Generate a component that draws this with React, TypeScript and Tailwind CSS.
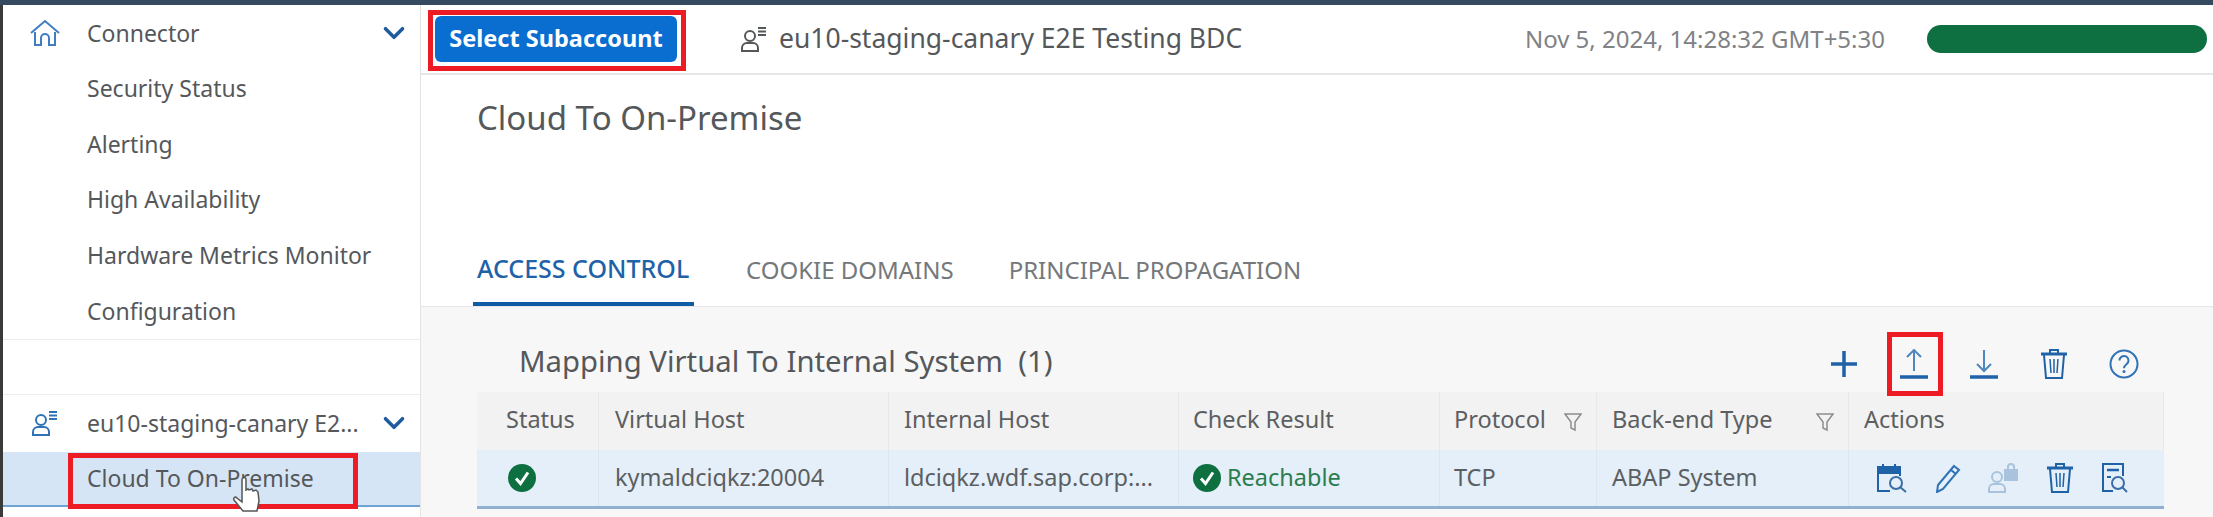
import { ChevronDown } from "lucide-react";

const font = { fontFamily: '"Noto Sans", sans-serif' };

function HomeIcon() {
  return (
    <svg width="30" height="28" viewBox="0 0 30 28" fill="none" stroke="#3f7fc1" strokeWidth="2">
      <path d="M1 14 15 2l14 12" />
      <path d="M5 13v13h6v-7a4 4 0 0 1 8 0v7h6V13" />
    </svg>
  );
}

function SubaccountIcon({ color = "#2f72b5", size = 26 }: { color?: string; size?: number }) {
  return (
    <svg width={size} height={size} viewBox="0 0 26 26" fill="none" stroke={color} strokeWidth="2">
      <circle cx="9" cy="10" r="5" />
      <path d="M1 25v-3a5 5 0 0 1 5-5h6a5 5 0 0 1 5 5v3z" />
      <path d="M17 2h8M17 5.500h8M17 9h8" />
    </svg>
  );
}

function FilterIcon() {
  return (
    <svg width="18" height="20" viewBox="0 0 18 20" fill="none" stroke="#8a8d90" strokeWidth="1.500">
      <path d="M1 2h16l-6 8v8l-4-2v-6z" />
    </svg>
  );
}

function TrashIcon() {
  return (
    <svg width="26" height="30" viewBox="0 0 26 30" fill="none" stroke="#1f62a8" strokeWidth="2">
      <path d="M0 5h26" strokeWidth="3" />
      <path d="M9 4V1h8v3" />
      <path d="M3 6l2 23h16l2-23" />
      <path d="M9 10l1 14M13 10v14M17 10l-1 14" strokeWidth="1.500" />
    </svg>
  );
}

function CheckCircle() {
  return (
    <svg width="28" height="28" viewBox="0 0 28 28">
      <circle cx="14" cy="14" r="14" fill="#0e7040" />
      <path d="M8 14.500l4.500 5L20 8.500" fill="none" stroke="#fff" strokeWidth="3" />
    </svg>
  );
}

function ToolbarIcons() {
  return (
    <div className="flex items-center">
      <div className="w-[70px] flex justify-center">
        <svg width="26" height="26" viewBox="0 0 26 26" stroke="#1f62a8" strokeWidth="3.500">
          <path d="M0 13h26M13 0v26" />
        </svg>
      </div>
      <div className="w-[70px] flex justify-center">
        <svg width="28" height="30" viewBox="0 0 28 30" fill="none" stroke="#4f86bf" strokeWidth="2">
          <path d="M14 1v21M7 8l7-7 7 7" />
          <path d="M0 28h28" stroke="#1f62a8" strokeWidth="3.500" />
        </svg>
      </div>
      <div className="w-[70px] flex justify-center">
        <svg width="28" height="30" viewBox="0 0 28 30" fill="none" stroke="#4f86bf" strokeWidth="2">
          <path d="M14 1v21M7 15l7 7 7-7" />
          <path d="M0 28h28" stroke="#1f62a8" strokeWidth="3.500" />
        </svg>
      </div>
      <div className="w-[70px] flex justify-center">
        <TrashIcon />
      </div>
      <div className="w-[70px] flex justify-center">
        <svg width="30" height="30" viewBox="0 0 30 30" fill="none">
          <circle cx="15" cy="15" r="13.500" stroke="#2f72b5" strokeWidth="2" />
          <path d="M10.500 11.500a4.500 4.500 0 1 1 7 3.700c-1.700 1.200-2.500 2-2.500 4" stroke="#2f72b5" strokeWidth="2" />
          <circle cx="15" cy="22.500" r="1.500" fill="#2f72b5" />
        </svg>
      </div>
    </div>
  );
}

function RowActions() {
  return (
    <div className="flex items-center pl-[28px]">
      <div className="w-[58px]">
        <svg width="30" height="30" viewBox="0 0 30 30" fill="none" stroke="#1f62a8" strokeWidth="2">
          <path d="M13 28H1V4h22v9" />
          <path d="M1 4h22v6H1z" fill="#1f62a8" />
          <path d="M6 1v4M18 1v4" />
          <circle cx="19" cy="20" r="6" stroke="#3a6ea5" />
          <path d="M23 24l6 5" stroke="#3a6ea5" />
        </svg>
      </div>
      <div className="w-[53px]">
        <svg width="26" height="30" viewBox="0 0 26 30" fill="none" stroke="#2f72b5" strokeWidth="2">
          <path d="M19 3l5 4L8 26l-6 3 1-7z" />
          <path d="M16 7l5 4" />
        </svg>
      </div>
      <div className="w-[59px]">
        <svg width="30" height="30" viewBox="0 0 30 30" fill="none" stroke="#a9c3dc" strokeWidth="2">
          <circle cx="9" cy="14" r="5" />
          <path d="M1 29v-3a5 5 0 0 1 5-5h6a5 5 0 0 1 5 5v3z" />
          <rect x="17" y="7" width="12" height="10" fill="#a9c3dc" />
          <path d="M20 7V4a3 3 0 0 1 6 0v3" />
        </svg>
      </div>
      <div className="w-[55px]">
        <TrashIcon />
      </div>
      <div>
        <svg width="26" height="30" viewBox="0 0 26 30" fill="none" stroke="#1f62a8" strokeWidth="2">
          <path d="M11 28H1V1h20v12" />
          <path d="M5 7h12" strokeWidth="2.500" />
          <path d="M5 14h4" />
          <circle cx="16" cy="20" r="6" stroke="#3a6ea5" />
          <path d="M20 24l5 5" stroke="#3a6ea5" />
        </svg>
      </div>
    </div>
  );
}

function SideItem({ label }: { label: string }) {
  return <div className="h-[55.6px] flex items-center pl-[84px]">{label}</div>;
}

const colClasses = [
  "w-[122px] pl-[29px]",
  "w-[290px] pl-[16px]",
  "w-[290px] pl-[15px]",
  "w-[261px] pl-[14px]",
  "w-[157px] pl-[14px]",
  "w-[252px] pl-[15px]",
  "flex-1 pl-[15px]",
];

export default function App() {
  return (
    <div className="relative w-[2213px] h-[517px] overflow-hidden bg-white flex flex-col" style={font}>
      <div className="h-[5px] bg-[#354a5f] shrink-0" />
      <div className="flex flex-1 min-h-0">
        <div className="w-[3px] bg-[#3a3a3a] shrink-0" />

        {/* sidebar */}
        <aside className="w-[418px] shrink-0 border-r border-[#e3e3e3] text-[23px] text-[#55585b] flex flex-col">
          <div className="h-[55.6px] flex items-center relative">
            <div className="w-[84px] flex justify-center">
              <HomeIcon />
            </div>
            <span>Connector</span>
            <ChevronDown className="absolute right-[9px] text-[#1f5c9e]" size={34} strokeWidth={2.500} />
          </div>
          <SideItem label="Security Status" />
          <SideItem label="Alerting" />
          <SideItem label="High Availability" />
          <SideItem label="Hardware Metrics Monitor" />
          <SideItem label="Configuration" />
          <div className="h-[56px] border-y border-[#ececec] shrink-0" />
          <div className="h-[57px] flex items-center relative shrink-0">
            <div className="w-[84px] pl-[29px]">
              <SubaccountIcon />
            </div>
            <span>eu10-staging-canary E2...</span>
            <ChevronDown className="absolute right-[9px] text-[#1f5c9e]" size={34} strokeWidth={2.500} />
          </div>
          <div className="h-[55px] bg-[#d5e5f5] border-b-2 border-[#6ea3d6] flex items-center pl-[84px] shrink-0">
            Cloud To On-Premise
          </div>
        </aside>

        {/* main */}
        <main className="flex-1 min-w-0 flex flex-col">
          <header className="h-[70px] shrink-0 border-b-2 border-[#e6e6e6] flex items-center pl-[14px] pr-[6px]">
            <button className="w-[242px] h-[46px] rounded-[6px] bg-[#0a6ed1] text-white font-bold text-[23.500px]">
              Select Subaccount
            </button>
            <div className="ml-[64px] mr-[12px]">
              <SubaccountIcon color="#55585b" />
            </div>
            <span className="text-[26.500px] text-[#55585b]">eu10-staging-canary E2E Testing BDC</span>
            <span className="ml-auto text-[24px] text-[#808285]">Nov 5, 2024, 14:28:32 GMT+5:30</span>
            <div className="ml-[42px] w-[280px] h-[28px] rounded-full bg-[#0e7040]" />
          </header>

          <div className="h-[156px] shrink-0 pl-[56px] pt-[18px] text-[33px] text-[#55585b]">Cloud To On-Premise</div>

          <div className="h-[75px] shrink-0 flex items-end pl-[52px] text-[24px] text-[#75787b]">
            <div className="w-[221px] h-full border-b-4 border-[#0f5ba6] pl-[4px] flex items-center text-[#1f62a8] text-[25px] pt-[4px] font-medium whitespace-nowrap">
              ACCESS CONTROL
            </div>
            <div className="ml-[52px] h-full flex items-center pt-[2px]">COOKIE DOMAINS</div>
            <div className="ml-[55px] h-full flex items-center pt-[2px]">PRINCIPAL PROPAGATION</div>
          </div>

          <section className="flex-1 min-h-0 bg-[#f7f7f7] pl-[56px] pr-[49px] border-t border-[#e6e6e6]">
            <div className="h-[85px] pt-[28px] flex items-center justify-between pr-[5px]">
              <span className="pl-[42px] pb-[3px] text-[29.300px] text-[#55585b]">
                Mapping Virtual To Internal System&nbsp; (1)
              </span>
              <ToolbarIcons />
            </div>

            <div className="text-[23.500px] text-[#5c5f62]">
              <div className="flex h-[58px] bg-[#f2f2f2]">
                {["Status", "Virtual Host", "Internal Host", "Check Result", "Protocol", "Back-end Type", "Actions"].map(
                  (title, i) => (
                    <div
                      key={title}
                      className={`${colClasses[i]} flex items-center border-r border-[#e8e8e8] pb-[2px] relative`}
                    >
                      {title}
                      {(title === "Protocol" || title === "Back-end Type") && (
                        <span className="absolute right-[14px] top-[20px]">
                          <FilterIcon />
                        </span>
                      )}
                    </div>
                  )
                )}
              </div>
              <div className="flex h-[59px] bg-[#e4eff9] border-b-[3px] border-[#8fb0d0]">
                <div className={`${colClasses[0]} flex items-center border-r border-[#dbe6f0] pl-[31px]`}>
                  <CheckCircle />
                </div>
                <div className={`${colClasses[1]} flex items-center border-r border-[#dbe6f0]`}>kymaldciqkz:20004</div>
                <div className={`${colClasses[2]} flex items-center border-r border-[#dbe6f0]`}>
                  ldciqkz.wdf.sap.corp:...
                </div>
                <div className={`${colClasses[3]} flex items-center gap-[6px] border-r border-[#dbe6f0] text-[#2b7d4f]`}>
                  <CheckCircle />
                  Reachable
                </div>
                <div className={`${colClasses[4]} flex items-center border-r border-[#dbe6f0]`}>TCP</div>
                <div className={`${colClasses[5]} flex items-center border-r border-[#dbe6f0]`}>ABAP System</div>
                <div className="flex-1 flex items-center">
                  <RowActions />
                </div>
              </div>
            </div>
          </section>
        </main>
      </div>

      {/* red highlight boxes drawn on top of the screenshot */}
      <div className="absolute left-[428px] top-[10px] w-[258px] h-[61px] border-[5px] border-[#ed1c24]" />
      <div className="absolute left-[68px] top-[453px] w-[290px] h-[56px] border-[5px] border-[#ed1c24]" />
      <div className="absolute left-[1887px] top-[332px] w-[56px] h-[64px] border-[5px] border-[#ed1c24]" />

      {/* hand cursor */}
      <svg className="absolute left-[232px] top-[476px]" width="32" height="41" viewBox="0 0 32 41" fill="#fff" stroke="#555" strokeWidth="1.500">
        <path d="M11 2c2-1 3 0 3 2v10l2-1 1 1 3-1 1 2 3-1 2 2 1 9-2 10H11L2 24c-1-2 1-4 3-2l5 4V4c0-1 0-2 1-2z" />
      </svg>
    </div>
  );
}
